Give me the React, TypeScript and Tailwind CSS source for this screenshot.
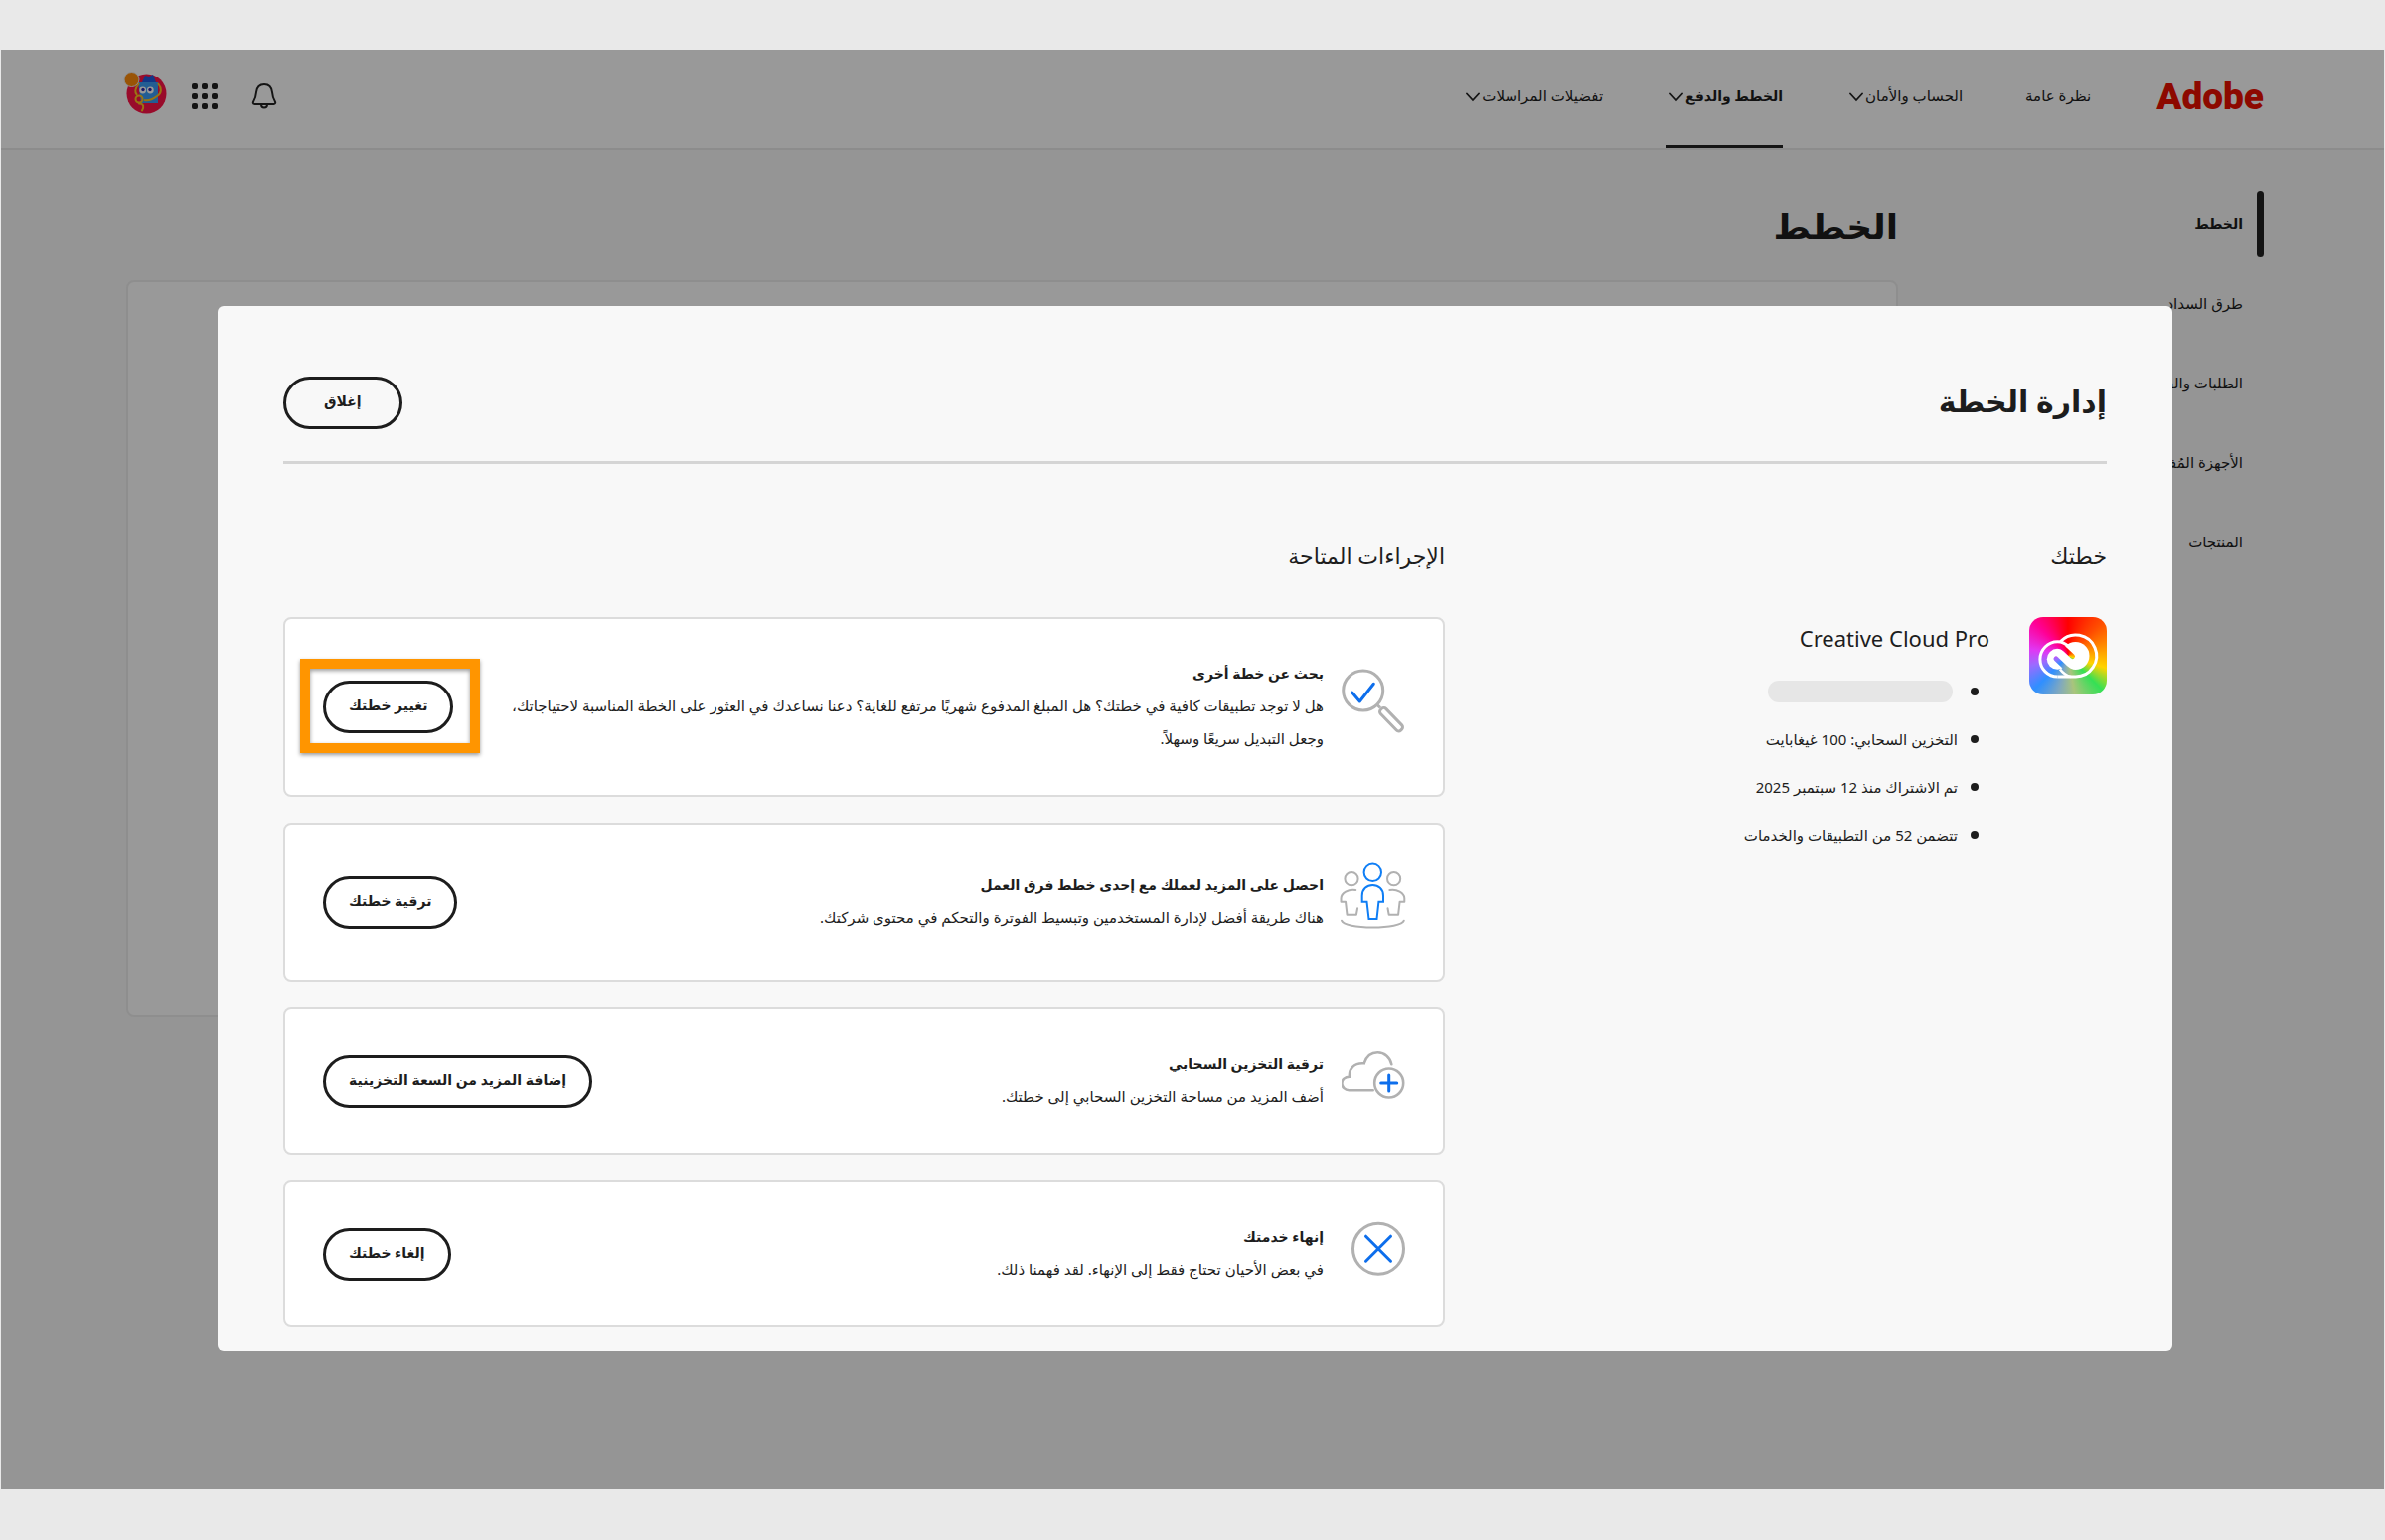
import React from 'react';

const navLinks = [
  { label: 'نظرة عامة', menu: false, active: false },
  { label: 'الحساب والأمان', menu: true, active: false },
  { label: 'الخطط والدفع', menu: true, active: true },
  { label: 'تفضيلات المراسلات', menu: true, active: false },
];

const sideLinks = ['الخطط', 'طرق السداد', 'الطلبات والفواتير', 'الأجهزة المُفعّلة', 'المنتجات'];

const planDetails = [
  '',
  'التخزين السحابي: 100 غيغابايت',
  'تم الاشتراك منذ 12 سبتمبر 2025',
  'تتضمن 52 من التطبيقات والخدمات',
];

const actions = [
  {
    icon: <SearchPlanIcon />,
    title: 'بحث عن خطة أخرى',
    lines: [
      'هل لا توجد تطبيقات كافية في خطتك؟ هل المبلغ المدفوع شهريًا مرتفع للغاية؟ دعنا نساعدك في العثور على الخطة المناسبة لاحتياجاتك،',
      'وجعل التبديل سريعًا وسهلاً.',
    ],
    button: 'تغيير خطتك',
    highlight: true,
  },
  {
    icon: <TeamIcon />,
    title: 'احصل على المزيد لعملك مع إحدى خطط فرق العمل',
    lines: ['هناك طريقة أفضل لإدارة المستخدمين وتبسيط الفوترة والتحكم في محتوى شركتك.'],
    button: 'ترقية خطتك',
    highlight: false,
  },
  {
    icon: <CloudIcon />,
    title: 'ترقية التخزين السحابي',
    lines: ['أضف المزيد من مساحة التخزين السحابي إلى خطتك.'],
    button: 'إضافة المزيد من السعة التخزينية',
    highlight: false,
  },
  {
    icon: <EndIcon />,
    title: 'إنهاء خدمتك',
    lines: ['في بعض الأحيان تحتاج فقط إلى الإنهاء. لقد فهمنا ذلك.'],
    button: 'إلغاء خطتك',
    highlight: false,
  },
];

function SearchPlanIcon() {
  return (
    <svg width="64" height="80" viewBox="0 0 64 80" fill="none" className="shrink-0">
      <circle cx="21.7" cy="23" r="20" stroke="#b1b1b1" strokeWidth="3" />
      <path d="M36 37.5l3 3" stroke="#b1b1b1" strokeWidth="3" />
      <rect x="35.5" y="48.5" width="29" height="7.4" rx="3" stroke="#b1b1b1" strokeWidth="3" transform="rotate(46 50 52.2)" />
      <path d="M10.7 25l7.6 9L32.3 16.3" stroke="#0d6eec" strokeWidth="3" strokeLinecap="round" strokeLinejoin="round" />
    </svg>
  );
}

function TeamIcon() {
  return (
    <svg width="64" height="80" viewBox="0 0 64 80" fill="none" strokeWidth="2" className="shrink-0 overflow-visible">
      <g stroke="#b1b1b1" strokeLinecap="round" strokeLinejoin="round">
        <circle cx="10" cy="16.7" r="6.6" />
        <circle cx="52.6" cy="16.7" r="6.6" />
        <path d="M14.3 28C7 26.5-.5 31-.5 36.3v3.4h4.5l1.5 13h9.4l1.2-6.4" />
        <path d="M48.3 28C55.6 26.5 63.3 31 63.3 36.3v3.4h-4.7l-1.5 13h-9.4l-1.2-6.4" />
        <path d="M0 58.7c1.5 4.3 15 6.8 31.3 6.8s30-2.5 31.5-6.8" />
      </g>
      <g stroke="#0f7ef5">
        <circle cx="31.3" cy="10.3" r="8.7" />
        <path d="M20.7 39.7v-6C20.7 27 25.5 23 31.3 23S42 27 42 33.7v6h-4.6L35.5 57h-8l-2-17.3z" />
      </g>
    </svg>
  );
}

function CloudIcon() {
  return (
    <svg width="64" height="68" viewBox="0 -1 64 68" fill="none" strokeWidth="2.6" className="shrink-0">
      <g stroke="#b1b1b1" strokeLinecap="round">
        <path d="M31.7 42.3H7.5C3.5 42.3.3 39 .3 35.3c0-3.6 3-6.6 7.7-6.6C7 21 12.5 14.5 22.7 15.3 25 8 30 4.3 36.3 4.3c7 0 12.700 5 14 12" />
        <circle cx="47.7" cy="35" r="14.5" />
      </g>
      <path d="M39.7 35h16M47.7 27v16" stroke="#0d6eec" strokeWidth="3" strokeLinecap="round" />
    </svg>
  );
}

function EndIcon() {
  return (
    <svg width="64" height="68" viewBox="0 0 64 68" fill="none" strokeWidth="3" className="shrink-0">
      <circle cx="37" cy="28.7" r="25.5" stroke="#b1b1b1" />
      <path d="M24.5 16.2l25 25M49.5 16.2l-25 25" stroke="#0d6eec" strokeLinecap="round" />
    </svg>
  );
}

function CreativeCloudLogo() {
  return (
    <div className="h-[78px] w-[78px] shrink-0 overflow-hidden rounded-[14px] bg-[conic-gradient(#ff0000,#ff4c00_45deg,#ffa500_85deg,#ffd400_108deg,#35e055_135deg,#a9c47c_170deg,#7fa8c0_195deg,#2f8fff_225deg,#9a6cff_255deg,#e038f4_280deg,#ff0096_315deg,#ff0000)]">
      <svg width="78" height="78" viewBox="0 0 78 78" fill="none">
        <mask id="cc">
          <circle cx="28.3" cy="42.3" r="10.5" fill="#fff" />
          <circle cx="46.5" cy="39" r="14" fill="#fff" />
          <path d="M29 37L44 50" stroke="#fff" strokeWidth="8" />
          <path d="M20 31.5c6-4.5 12-3 16 1l7.5 7" stroke="#000" strokeWidth="5" strokeLinecap="round" />
          <path d="M27 42l10 9.5c4 3.500 6 4.600 10 4.600" stroke="#000" strokeWidth="5" strokeLinecap="round" />
          <path d="M28.5 60H46.5A21 21 0 1 0 31.5 24.5" stroke="#fff" strokeWidth="3" />
          <path d="M28.5 60A17.6 17.6 0 1 1 28.5 24.8C33 24.8 36 26 40 30" stroke="#fff" strokeWidth="3" />
          <path d="M31 52.5c3 4 6 6.5 11 7.5" stroke="#fff" strokeWidth="2.6" />
        </mask>
        <rect width="78" height="78" fill="#fff" mask="url(#cc)" />
      </svg>
    </div>
  );
}

function Avatar() {
  return (
    <svg width="46" height="46" viewBox="0 5 46 46" fill="none" className="overflow-visible">
      <circle cx="25.5" cy="25.5" r="20" fill="#ff1348" />
      <path d="M17 14h20v21H20z" fill="#3a9cf5" />
      <path d="M21 14l3-7 4 1 4-2 3 8z" fill="#1f5be0" />
      <path d="M37 15c4 5 4 10-1 13-4 3-9 5-13 4M18 15c-4 5-5 9-2 12" stroke="#ffc21f" strokeWidth="2" />
      <circle cx="18" cy="31" r="3.5" stroke="#ffc21f" strokeWidth="2" />
      <path d="M18 35.500c5 0 5 3.500 3 7" stroke="#ffc21f" strokeWidth="2" strokeLinecap="round" />
      <circle cx="21.7" cy="22" r="3.4" fill="#fff" />
      <circle cx="29.3" cy="22" r="3.4" fill="#fff" />
      <circle cx="22" cy="21.500" r="1.700" fill="#2a2ab0" />
      <circle cx="29" cy="21.500" r="1.700" fill="#2a2ab0" />
      <circle cx="10.5" cy="11" r="7.5" fill="#ff8c0a" stroke="#f0f0f0" />
    </svg>
  );
}

function AppsIcon() {
  return (
    <svg width="26" height="26" viewBox="0 0 26 26" fill="#222">
      {[0, 10, 20].map((y) =>
        [0, 10, 20].map((x) => <rect key={`${x}-${y}`} x={x} y={y} width="6" height="6" rx="2" />)
      )}
    </svg>
  );
}

function BellIcon() {
  return (
    <svg width="26" height="28" viewBox="0 0 26 28" fill="none" stroke="#222" strokeWidth="2">
      <path d="M13 2c-5 0-7.5 3.5-8 8-.4 4.5-1 6.5-2.8 9.2C1.3 20.7 2 22 3.5 22h19c1.5 0 2.2-1.300 1.300-2.800C22 16.500 21.400 14.500 21 10c-.5-4.500-3-8-8-8z" />
      <path d="M10 22.500c0 2 1.300 3 3 3s3-1 3-3" />
    </svg>
  );
}

function Chevron() {
  return (
    <svg width="14" height="14" viewBox="0 0 14 14" fill="none" stroke="#222" strokeWidth="1.8">
      <path d="M1 5.500l6 6.500 6-6.500" strokeLinecap="round" />
    </svg>
  );
}

function PillButton({ children, wide = false }: { children: React.ReactNode; wide?: boolean }) {
  return (
    <button
      type="button"
      className={`h-[53px] rounded-full border-[3px] border-[#1d1d1d] pb-1 text-[14px] font-bold whitespace-nowrap ${wide ? 'px-[38px]' : 'px-[23px]'}`}
    >
      {children}
    </button>
  );
}

export default function App() {
  return (
    <div
      dir="rtl"
      lang="ar"
      className="flex min-h-screen flex-col bg-[#e9e9e9] px-px pt-[50px] pb-[51px] font-['Noto_Sans','DejaVu_Sans',sans-serif] text-[15px] text-[#1d1d1d]"
    >
      <div className="relative flex-1 bg-[#f8f8f8]">
        <header className="flex h-[101px] items-stretch justify-between border-b-2 border-[#e9e9e9] bg-white ps-[121px] pe-[121px]">
          <div className="flex">
            <a href="#" className="flex items-center pb-1 font-['Roboto',sans-serif] text-[37px] font-black text-[#eb1000]" dir="ltr">
              Adobe
            </a>
            <nav className="ms-[66px] flex gap-[63px]">
              {navLinks.map((link) => (
                <a
                  key={link.label}
                  href="#"
                  className={`flex items-center gap-0.5 border-b-[3px] pb-1 whitespace-nowrap ${link.active ? 'border-[#222] text-[14px] font-bold' : 'border-transparent'} ${link.menu ? 'pe-1' : ''}`}
                >
                  {link.label}
                  {link.menu && <Chevron />}
                </a>
              ))}
            </nav>
          </div>
          <div className="flex items-center gap-[25px] pb-1.5">
            <div className="flex items-center gap-[34px]">
              <button type="button" aria-label="الإشعارات"><BellIcon /></button>
              <button type="button" aria-label="التطبيقات"><AppsIcon /></button>
            </div>
            <button type="button" aria-label="الحساب"><Avatar /></button>
          </div>
        </header>

        <div className="flex ps-[121px] pe-[126px]">
          <nav className="flex w-[368px] shrink-0 flex-col gap-[13px] pt-[41px]">
            {sideLinks.map((label, i) => (
              <a key={label} href="#" className="flex h-[67px] items-center gap-[14px]">
                <span className={`h-full w-[7px] rounded-full ${i === 0 ? 'bg-[#222]' : ''}`} />
                <span className={i === 0 ? 'pb-0.5 text-[14px] font-bold' : ''}>{label}</span>
              </a>
            ))}
          </nav>
          <main className="flex-1 pt-[47px]">
            <h1 className="mb-[24px] text-[36px] leading-[60px] font-bold">الخطط</h1>
            <div className="h-[742px] rounded-lg border-2 border-[#ededed] bg-white" />
          </main>
        </div>

        <div className="absolute inset-0 bg-black/40 ps-[213px] pe-[218px] pt-[258px]">
          <div role="dialog" aria-label="إدارة الخطة" className="rounded-md bg-[#f8f8f8] px-[66px] pt-[71px] pb-[24px]">
            <div className="flex items-center justify-between border-b-[3px] border-[#d5d5d5] pb-[32px]">
              <h2 className="pb-1 text-[30px] leading-[48px] font-bold">إدارة الخطة</h2>
              <PillButton wide>إغلاق</PillButton>
            </div>

            <div className="flex pt-[72px]">
              <section className="w-[666px] shrink-0">
                <h3 className="mb-[42px] text-[22px] leading-[40px]">خطتك</h3>
                <div className="flex gap-[40px]">
                  <CreativeCloudLogo />
                  <div>
                    <p className="text-right text-[22px] leading-[42px]" dir="ltr">Creative Cloud Pro</p>
                    <ul className="mt-[9px]">
                      {planDetails.map((detail, i) => (
                        <li key={i} className="flex h-[48px] items-center gap-[13px] ps-[11px]">
                          <span className="h-2 w-2 rounded-full bg-[#1d1d1d]" />
                          {detail || <span className="ms-[5px] h-[22px] w-[186px] rounded-full bg-[#e6e6e6]" />}
                        </li>
                      ))}
                    </ul>
                  </div>
                </div>
              </section>

              <section className="min-w-0 flex-1">
                <h3 className="mb-[42px] text-[22px] leading-[40px]">الإجراءات المتاحة</h3>
                <div className="flex flex-col gap-[26px]">
                  {actions.map((action) => (
                    <div
                      key={action.title}
                      className="flex items-center gap-[18px] rounded-lg border-2 border-[#dcdcdc] bg-white px-[38px] py-[38px]"
                    >
                      {action.icon}
                      <div className="min-w-0 flex-1 pb-0.5 leading-[33px] whitespace-nowrap">
                        <h4 className="text-[14px] leading-[33px] font-bold">{action.title}</h4>
                        {action.lines.map((line) => (
                          <p key={line}>{line}</p>
                        ))}
                      </div>
                      <div className="relative">
                        <PillButton>{action.button}</PillButton>
                        {action.highlight && (
                          <span className="pointer-events-none absolute -start-[27px] -end-[23px] -top-[22px] -bottom-[20px] border-[10px] border-[#ff9500] shadow-[0_2px_4px_rgba(0,0,0,0.4),inset_0_2px_4px_rgba(0,0,0,0.4)]" />
                        )}
                      </div>
                    </div>
                  ))}
                </div>
              </section>
            </div>
          </div>
        </div>
      </div>
    </div>
  );
}
